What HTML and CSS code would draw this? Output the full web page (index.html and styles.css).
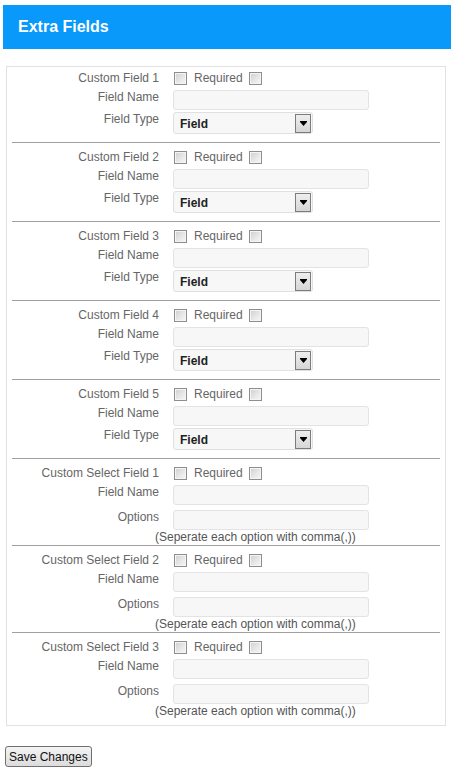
FILE: index.html
```html
<!DOCTYPE html>
<html>
<head>
<meta charset="utf-8">
<link rel="stylesheet" href="styles.css">
</head>
<body>
<div class="title">Extra Fields</div>
<div class="panel">

  <div class="section">
    <div class="row row-head"><span class="label">Custom Field 1</span><div class="ctrl"><span class="cb"></span><span class="req">Required</span><span class="cb"></span></div></div>
    <div class="row row-gap2"><span class="label">Field Name</span><span class="input"></span></div>
    <div class="row row-gap2"><span class="label">Field Type</span><div class="select"><span class="sel-text">Field</span><span class="sel-btn"><svg width="7" height="5" viewBox="0 0 7 5"><path d="M0 0H7V1L3.5 5L0 1Z" fill="#000"/></svg></span></div></div>
  </div>
  <hr class="sep">

  <div class="section">
    <div class="row row-head"><span class="label">Custom Field 2</span><div class="ctrl"><span class="cb"></span><span class="req">Required</span><span class="cb"></span></div></div>
    <div class="row row-gap2"><span class="label">Field Name</span><span class="input"></span></div>
    <div class="row row-gap2"><span class="label">Field Type</span><div class="select"><span class="sel-text">Field</span><span class="sel-btn"><svg width="7" height="5" viewBox="0 0 7 5"><path d="M0 0H7V1L3.5 5L0 1Z" fill="#000"/></svg></span></div></div>
  </div>
  <hr class="sep">

  <div class="section">
    <div class="row row-head"><span class="label">Custom Field 3</span><div class="ctrl"><span class="cb"></span><span class="req">Required</span><span class="cb"></span></div></div>
    <div class="row row-gap2"><span class="label">Field Name</span><span class="input"></span></div>
    <div class="row row-gap2"><span class="label">Field Type</span><div class="select"><span class="sel-text">Field</span><span class="sel-btn"><svg width="7" height="5" viewBox="0 0 7 5"><path d="M0 0H7V1L3.5 5L0 1Z" fill="#000"/></svg></span></div></div>
  </div>
  <hr class="sep">

  <div class="section">
    <div class="row row-head"><span class="label">Custom Field 4</span><div class="ctrl"><span class="cb"></span><span class="req">Required</span><span class="cb"></span></div></div>
    <div class="row row-gap2"><span class="label">Field Name</span><span class="input"></span></div>
    <div class="row row-gap2"><span class="label">Field Type</span><div class="select"><span class="sel-text">Field</span><span class="sel-btn"><svg width="7" height="5" viewBox="0 0 7 5"><path d="M0 0H7V1L3.5 5L0 1Z" fill="#000"/></svg></span></div></div>
  </div>
  <hr class="sep">

  <div class="section">
    <div class="row row-head"><span class="label">Custom Field 5</span><div class="ctrl"><span class="cb"></span><span class="req">Required</span><span class="cb"></span></div></div>
    <div class="row row-gap2"><span class="label">Field Name</span><span class="input"></span></div>
    <div class="row row-gap2"><span class="label">Field Type</span><div class="select"><span class="sel-text">Field</span><span class="sel-btn"><svg width="7" height="5" viewBox="0 0 7 5"><path d="M0 0H7V1L3.5 5L0 1Z" fill="#000"/></svg></span></div></div>
  </div>
  <hr class="sep">

  <div class="section">
    <div class="row row-head"><span class="label">Custom Select Field 1</span><div class="ctrl"><span class="cb"></span><span class="req">Required</span><span class="cb"></span></div></div>
    <div class="row row-gap2"><span class="label">Field Name</span><span class="input"></span></div>
    <div class="row row-gap5"><span class="label">Options</span><span class="input"></span></div>
    <div class="hint">(Seperate each option with comma(,))</div>
  </div>
  <hr class="sep">

  <div class="section">
    <div class="row row-head"><span class="label">Custom Select Field 2</span><div class="ctrl"><span class="cb"></span><span class="req">Required</span><span class="cb"></span></div></div>
    <div class="row row-gap2"><span class="label">Field Name</span><span class="input"></span></div>
    <div class="row row-gap5"><span class="label">Options</span><span class="input"></span></div>
    <div class="hint">(Seperate each option with comma(,))</div>
  </div>
  <hr class="sep">

  <div class="section">
    <div class="row row-head"><span class="label">Custom Select Field 3</span><div class="ctrl"><span class="cb"></span><span class="req">Required</span><span class="cb"></span></div></div>
    <div class="row row-gap2"><span class="label">Field Name</span><span class="input"></span></div>
    <div class="row row-gap5"><span class="label">Options</span><span class="input"></span></div>
    <div class="hint">(Seperate each option with comma(,))</div>
  </div>

</div>
<button class="save">Save Changes</button>
</body>
</html>
```

FILE: styles.css
```css
html, body {
  margin: 0;
  padding: 0;
  background: #ffffff;
}
body {
  font-family: "Liberation Sans", Arial, sans-serif;
  font-size: 12px;
  color: #666666;
}
.title {
  margin: 5px 0 0 3px;
  height: 44px;
  line-height: 44px;
  padding-left: 15px;
  background: #0899fb;
  color: #ffffff;
  font-weight: bold;
  font-size: 16px;
}
.panel {
  margin: 17px 0 0 6px;
  width: 440px;
  box-sizing: border-box;
  border: 1px solid #e2e2e2;
  padding: 1px 5px 6px 5px;
}
.section {
  display: flex;
  flex-direction: column;
}
.row {
  display: grid;
  grid-template-columns: 147px 196px;
  column-gap: 14px;
  align-items: start;
}
.row-gap2 { margin-top: 2px; }
.row-gap5 { margin-top: 5px; }
.label {
  text-align: right;
  line-height: 14px;
  color: #666666;
  white-space: nowrap;
}
.row-head {
  height: 20px;
  align-items: center;
}
.row-head .label {
  line-height: 20px;
}
.ctrl {
  display: flex;
  align-items: center;
  height: 20px;
  padding-left: 1px;
}
.cb {
  width: 13px;
  height: 13px;
  box-sizing: border-box;
  border: 1px solid #8e8e8e;
  background: linear-gradient(135deg, #cfcfcf 0%, #e9e9e9 60%, #f6f6f6 100%);
  box-shadow: inset 0 0 0 1px #f4f4f4;
  margin-top: 1px;
}
.req {
  margin: 0 6px 0 7px;
  color: #666666;
  line-height: 14px;
}
.input {
  display: block;
  height: 20px;
  box-sizing: border-box;
  border: 1px solid #e3e3e3;
  border-radius: 3px;
  background: #f7f7f7;
}
.select {
  width: 140px;
  height: 22px;
  box-sizing: border-box;
  border: 1px solid #e0e0e0;
  border-radius: 3px;
  background: #f7f7f7;
  display: flex;
  align-items: center;
  justify-content: space-between;
  padding: 0 1px 0 6px;
}
.sel-text {
  font-weight: bold;
  color: #222222;
  line-height: 14px;
  padding-top: 2px;
}
.sel-btn {
  width: 16px;
  height: 19px;
  box-sizing: border-box;
  border: 1px solid #7c7c7c;
  background: linear-gradient(#eeeeee, #d6d6d6);
  display: flex;
  align-items: center;
  justify-content: center;
}
.hint {
  line-height: 15px;
  padding-left: 143px;
  color: #555555;
  white-space: nowrap;
}
.sep {
  margin: 8px 0 4px 0;
  border: 0;
  height: 1px;
  background: #a0a0a0;
}
.section:has(.hint) + .sep {
  margin-top: 0;
}
.save {
  display: block;
  margin: 20px 0 0 5px;
  height: 21px;
  padding: 0 3px;
  font-family: "Liberation Sans", Arial, sans-serif;
  font-size: 12px;
  color: #111111;
  border: 1px solid #707070;
  border-radius: 3px;
  background: linear-gradient(#f4f4f4, #dcdcdc);
}
```
